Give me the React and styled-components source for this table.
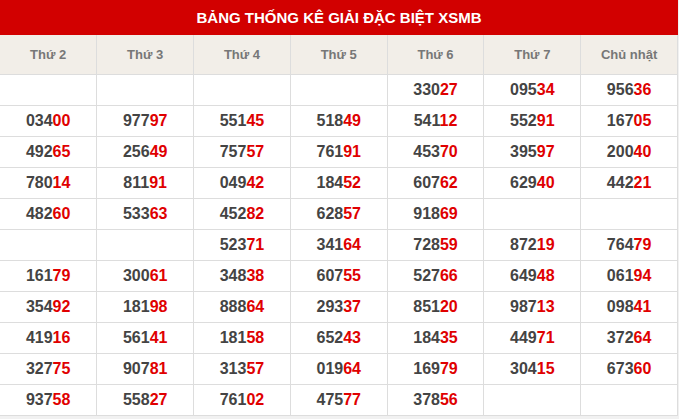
import React from "react";
import styled, { createGlobalStyle } from "styled-components";

const GlobalStyle = createGlobalStyle`
  body {
    margin: 0;
    background: #f1f1f1;
    font-family: Arial, "Liberation Sans", sans-serif;
  }
`;

const Board = styled.div`
  width: 678px;
  background: #fff;
`;

const Title = styled.div`
  height: 35px;
  background: #d20000;
  color: #fff;
  font-weight: bold;
  font-size: 15px;
  display: flex;
  align-items: center;
  justify-content: center;
  text-transform: uppercase;
`;

const Table = styled.table`
  width: 100%;
  border-collapse: collapse;
  table-layout: fixed;
`;

const HeadCell = styled.th`
  height: 39px;
  background: #f2eee8;
  color: #777;
  font-size: 13px;
  font-weight: bold;
  border-right: 1px solid #ddd;
  border-bottom: 1px solid #ddd;
  padding: 0;
`;

const Cell = styled.td`
  height: 30px;
  padding: 0;
  text-align: center;
  font-size: 16px;
  font-weight: bold;
  color: #444;
  border-right: 1px solid #ddd;
  border-bottom: 1px solid #ddd;
`;

const Tail = styled.span`
  color: #e00000;
`;

const days = ["Thứ 2", "Thứ 3", "Thứ 4", "Thứ 5", "Thứ 6", "Thứ 7", "Chủ nhật"];

const rows = [
  ["", "", "", "", "33027", "09534", "95636"],
  ["03400", "97797", "55145", "51849", "54112", "55291", "16705"],
  ["49265", "25649", "75757", "76191", "45370", "39597", "20040"],
  ["78014", "81191", "04942", "18452", "60762", "62940", "44221"],
  ["48260", "53363", "45282", "62857", "91869", "", ""],
  ["", "", "52371", "34164", "72859", "87219", "76479"],
  ["16179", "30061", "34838", "60755", "52766", "64948", "06194"],
  ["35492", "18198", "88864", "29337", "85120", "98713", "09841"],
  ["41916", "56141", "18158", "65243", "18435", "44971", "37264"],
  ["32775", "90781", "31357", "01964", "16979", "30415", "67360"],
  ["93758", "55827", "76102", "47577", "37856", "", ""],
];

function Number({ value }) {
  if (!value) return null;
  return (
    <>
      {value.slice(0, 3)}
      <Tail>{value.slice(3)}</Tail>
    </>
  );
}

export default function App() {
  return (
    <>
      <GlobalStyle />
      <Board>
        <Title>Bảng thống kê giải đặc biệt XSMB</Title>
        <Table>
          <thead>
            <tr>
              {days.map((d) => (
                <HeadCell key={d}>{d}</HeadCell>
              ))}
            </tr>
          </thead>
          <tbody>
            {rows.map((row, i) => (
              <tr key={i}>
                {row.map((v, j) => (
                  <Cell key={j}>
                    <Number value={v} />
                  </Cell>
                ))}
              </tr>
            ))}
          </tbody>
        </Table>
      </Board>
    </>
  );
}
